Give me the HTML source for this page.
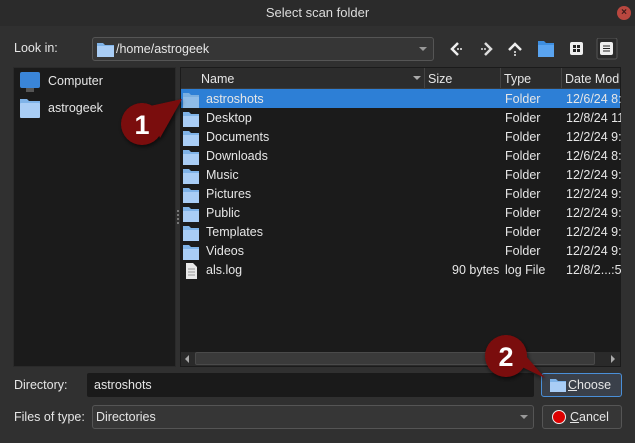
<!DOCTYPE html>
<html><head><meta charset="utf-8"><style>
*{box-sizing:border-box;margin:0;padding:0}
body{width:635px;height:443px;background:#303030;font-family:"Liberation Sans","DejaVu Sans",sans-serif;font-size:12.5px;color:#e6e6e6;position:relative;overflow:hidden}
.a{position:absolute}
.title{left:0;top:0;width:635px;height:26px;background:#2b2b2b;text-align:center;line-height:26px;font-size:13px;color:#ddd}
.pane{background:#1b1b1b}
.row{position:absolute;left:181px;width:439px;height:19px;line-height:19px}
.btn{border:1px solid #555;border-radius:3px;background:#3a3a3a}
</style></head><body>
<div class="a title">Select scan folder</div>
<div class="a" style="left:617px;top:6px;width:14px;height:14px;border-radius:7px;background:#b9473f;color:#3a1a1a;font-size:10px;text-align:center;line-height:14px;font-weight:bold">×</div>

<div class="a" style="left:14px;top:41px">Look in:</div>
<div class="a btn" style="left:92px;top:37px;width:342px;height:24px;background:#363636"></div>
<svg class="a" style="left:97px;top:41px" width="17" height="16"><path d="M0 2h6l2 2h9v12H0z" fill="#7fb3e8"/><rect y="5" width="17" height="11" fill="#a9cdf5"/></svg>
<div class="a" style="left:116px;top:42px">/home/astrogeek</div>
<div class="a" style="left:419px;top:47px;width:0;height:0;border-left:4px solid transparent;border-right:4px solid transparent;border-top:4px solid #999"></div>

<svg class="a" style="left:444px;top:38px" width="180" height="22">
<path d="M14 5l-6 6 6 6" stroke="#eee" stroke-width="2.5" fill="none"/><circle cx="14" cy="11" r="1" fill="#eee"/><circle cx="17" cy="11" r="1" fill="#eee"/>
<path d="M41 5l6 6-6 6" stroke="#ddd" stroke-width="2.5" fill="none"/><circle cx="41" cy="11" r="1" fill="#ddd"/><circle cx="38" cy="11" r="1" fill="#ddd"/>
<path d="M65 12l6-6 6 6" stroke="#eee" stroke-width="2.5" fill="none"/><circle cx="71" cy="14" r="1" fill="#eee"/><circle cx="71" cy="17" r="1" fill="#eee"/>
<path d="M94 3h6l2 2h8v14H94z" fill="#3d8ee0"/><rect x="94" y="7" width="16" height="12" fill="#5aa4f0"/>
<rect x="126" y="4" width="13" height="13" rx="2" fill="#eee"/><rect x="129" y="7" width="3" height="3" fill="#222"/><rect x="133" y="7" width="3" height="3" fill="#222"/><rect x="129" y="11" width="3" height="3" fill="#222"/><rect x="133" y="11" width="3" height="3" fill="#222"/>
<rect x="153" y="0" width="20" height="21" rx="2" fill="#2a2a2a" stroke="#555"/>
<rect x="156" y="4" width="13" height="13" rx="2" fill="#eee"/><path d="M159 8h7M159 10.5h7M159 13h7" stroke="#222"/>
</svg>

<div class="a pane" style="left:13px;top:67px;width:163px;height:300px;border:1px solid #2a2a2a"></div>
<svg class="a" style="left:18px;top:70px" width="24" height="54"><rect x="2" y="2" width="20" height="16" rx="2" fill="#3a85d8"/><rect x="8" y="18" width="8" height="4" fill="#555"/><path d="M2 29h7l2 2h11v16H2z" fill="#7fb3e8"/><rect x="2" y="33" width="20" height="15" rx="1" fill="#a9cdf5"/></svg>
<div class="a" style="left:48px;top:74px">Computer</div>
<div class="a" style="left:48px;top:101px">astrogeek</div>
<div class="a" style="left:177px;top:210px;width:2px;height:14px;border-left:2px dotted #777"></div>

<div class="a pane" style="left:180px;top:67px;width:441px;height:300px"></div>
<div class="a" style="left:181px;top:68px;width:439px;height:21px;background:#2c2c2c;border-bottom:1px solid #3a3a3a"></div>
<div class="a" style="left:201px;top:72px">Name</div>
<div class="a" style="left:413px;top:76px;border-left:4px solid transparent;border-right:4px solid transparent;border-top:4px solid #aaa"></div>
<div class="a" style="left:424px;top:68px;width:1px;height:20px;background:#444"></div>
<div class="a" style="left:428px;top:72px">Size</div>
<div class="a" style="left:500px;top:68px;width:1px;height:20px;background:#444"></div>
<div class="a" style="left:504px;top:72px">Type</div>
<div class="a" style="left:561px;top:68px;width:1px;height:20px;background:#444"></div>
<div class="a" style="left:565px;top:72px;width:55px;overflow:hidden;white-space:nowrap">Date Modified</div>

<div class="row" style="top:89px;background:#2d7fd6"></div>
<div class="a" style="left:181px;top:90px;width:440px;height:190px">
<svg class="a" style="left:0;top:0" width="22" height="190">
<path d="M2 3h6l2 2h8v12H2z" fill="#7aaee0"/>
<path d="M2 22h6l2 2h8v12H2z M2 41h6l2 2h8v12H2z M2 60h6l2 2h8v12H2z M2 79h6l2 2h8v12H2z M2 98h6l2 2h8v12H2z M2 117h6l2 2h8v12H2z M2 136h6l2 2h8v12H2z M2 155h6l2 2h8v12H2z" fill="#7fb3e8"/>
<g fill="#a9cdf5"><rect x="2" y="26" width="16" height="11"/><rect x="2" y="45" width="16" height="11"/><rect x="2" y="64" width="16" height="11"/><rect x="2" y="83" width="16" height="11"/><rect x="2" y="102" width="16" height="11"/><rect x="2" y="121" width="16" height="11"/><rect x="2" y="140" width="16" height="11"/><rect x="2" y="159" width="16" height="11"/></g>
<rect x="2" y="7" width="16" height="11" fill="#8fbce8"/>
<path d="M5 173h7l4 4v12H5z" fill="#e8e8e8"/><path d="M7 179h7M7 182h7M7 185h7" stroke="#999"/>
</svg>
<div style="position:absolute;left:25px;top:0;line-height:19px">astroshots<br>Desktop<br>Documents<br>Downloads<br>Music<br>Pictures<br>Public<br>Templates<br>Videos<br>als.log</div>
<div style="position:absolute;left:324px;top:0;line-height:19px">Folder<br>Folder<br>Folder<br>Folder<br>Folder<br>Folder<br>Folder<br>Folder<br>Folder<br>log File</div>
<div style="position:absolute;left:271px;top:171px;line-height:19px">90 bytes</div>
<div style="position:absolute;left:385px;top:0;width:55px;overflow:hidden;white-space:nowrap;line-height:19px">12/6/24 8:00<br>12/8/24 11:0<br>12/2/24 9:00<br>12/6/24 8:00<br>12/2/24 9:00<br>12/2/24 9:00<br>12/2/24 9:00<br>12/2/24 9:00<br>12/2/24 9:00<br>12/8/2...:5</div>
</div>
<div class="a" style="left:181px;top:352px;width:439px;height:14px;background:#2a2a2a"></div>
<div class="a" style="left:195px;top:352px;width:400px;height:13px;background:#3a3a3a;border:1px solid #4a4a4a;border-radius:2px"></div>
<div class="a" style="left:185px;top:355px;border-top:4px solid transparent;border-bottom:4px solid transparent;border-right:4px solid #aaa"></div>
<div class="a" style="left:611px;top:355px;border-top:4px solid transparent;border-bottom:4px solid transparent;border-left:4px solid #aaa"></div>

<div class="a" style="left:14px;top:378px">Directory:</div>
<div class="a" style="left:87px;top:373px;width:447px;height:24px;background:#1a1a1a;border-radius:2px"></div>
<div class="a" style="left:94px;top:378px">astroshots</div>
<div class="a" style="left:541px;top:373px;width:81px;height:24px;border:1px solid #4a8fd8;border-radius:3px;background:#3a404a"></div>
<svg class="a" style="left:550px;top:378px" width="16" height="14"><path d="M0 1h6l2 2h8v11H0z" fill="#7fb3e8"/><rect y="4" width="16" height="10" fill="#a9cdf5"/></svg>
<div class="a" style="left:568px;top:378px"><u>C</u>hoose</div>

<div class="a" style="left:14px;top:410px">Files of type:</div>
<div class="a btn" style="left:92px;top:405px;width:442px;height:24px;background:#363636"></div>
<div class="a" style="left:96px;top:410px">Directories</div>
<div class="a" style="left:520px;top:415px;border-left:4px solid transparent;border-right:4px solid transparent;border-top:4px solid #999"></div>
<div class="a btn" style="left:542px;top:405px;width:80px;height:24px;background:#363636"></div>
<div class="a" style="left:552px;top:410px;width:14px;height:14px;border-radius:7px;background:#d00;border:1.5px solid #eee"></div>
<div class="a" style="left:570px;top:410px"><u>C</u>ancel</div>

<svg class="a" style="left:0;top:0" width="635" height="443">
<defs><filter id="s"><feDropShadow dx="1" dy="2" stdDeviation="2" flood-opacity=".6"/></filter></defs>
<g filter="url(#s)"><path d="M150 106L182 99 160 138z" fill="#7a0b0b"/><circle cx="142" cy="124" r="21" fill="#7a0b0b"/>
<path d="M512 340L545 378 520 366z" fill="#7a0b0b"/><circle cx="506" cy="356" r="21" fill="#7a0b0b"/></g>
<text x="142" y="134" fill="#fff" font-family="Liberation Sans" font-weight="bold" font-size="27" text-anchor="middle">1</text>
<text x="506" y="366" fill="#fff" font-family="Liberation Sans" font-weight="bold" font-size="27" text-anchor="middle">2</text>
</svg>
</body></html>
